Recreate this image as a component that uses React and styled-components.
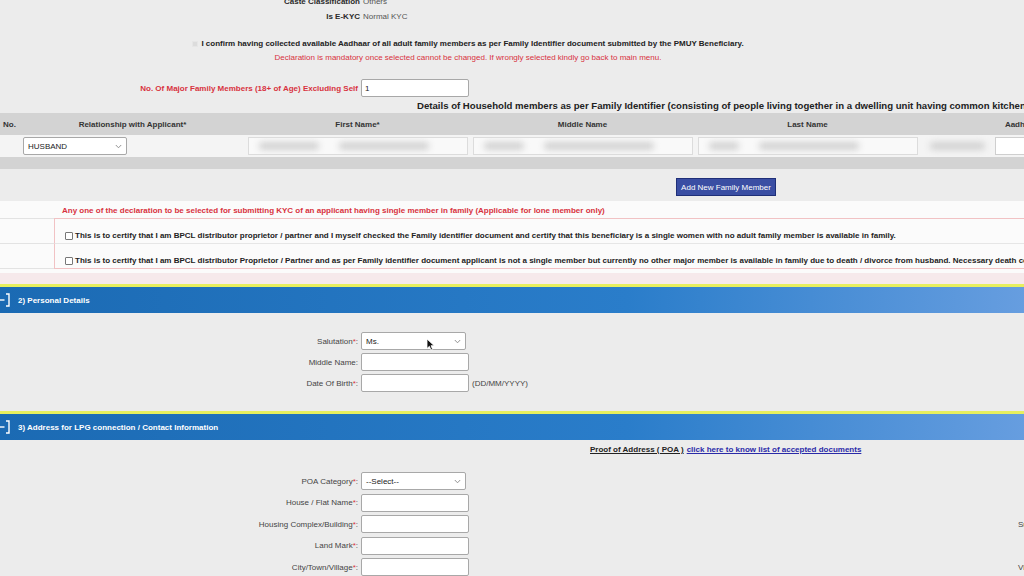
import React from 'react';
import styled, { createGlobalStyle } from 'styled-components';

const GlobalStyle = createGlobalStyle`
  * { box-sizing: border-box; }
  html, body { margin: 0; padding: 0; }
  body {
    background: #ececec;
    font-family: "Liberation Sans", Arial, sans-serif;
    font-size: 8px;
    color: #333;
    width: 1024px;
    height: 576px;
    overflow: hidden;
  }
`;

const Page = styled.div`
  width: 1024px;
  height: 576px;
  overflow: hidden;
`;

const Inner = styled.div`
  width: 1140px;
  margin-top: -6px;
`;

const InfoRow = styled.div`
  display: grid;
  grid-template-columns: 360px auto;
  column-gap: 3px;
  line-height: 15px;
`;

const InfoLabel = styled.span`
  text-align: right;
  font-weight: bold;
  color: #2a2a2a;
`;

const InfoValue = styled.span`
  color: #555;
`;

const Confirm = styled.div`
  width: 936px;
  margin-top: 14px;
  display: flex;
  justify-content: center;
  align-items: center;
  gap: 3px;
  font-weight: bold;
  color: #222;
  line-height: 12px;
  white-space: nowrap;
`;

const FaintBox = styled.span`
  width: 6px;
  height: 6px;
  background: #dcdcdc;
  border: 1px solid #e6e6e6;
`;

const RedNote = styled.div`
  width: 936px;
  text-align: center;
  color: #d8323e;
  line-height: 15px;
  white-space: nowrap;
`;

const MajorRow = styled.div`
  display: grid;
  grid-template-columns: 358px 108px;
  column-gap: 3px;
  align-items: center;
  margin-top: 14px;
  height: 18px;
`;

const MajorLabel = styled.span`
  text-align: right;
  font-weight: bold;
  color: #d8323e;
`;

const TextBox = styled.div`
  height: 18px;
  background: #fff;
  border: 1px solid #a8a8a8;
  border-radius: 2px;
  padding: 0 3px;
  display: flex;
  align-items: center;
  color: #222;
`;

const TableHeading = styled.div`
  padding-left: 417px;
  font-size: 9.6px;
  font-weight: bold;
  color: #222;
  white-space: nowrap;
  line-height: 14px;
  margin-top: 2px;
`;

const cols = '20px 225px 225px 225px 225px 220px';

const HeadRow = styled.div`
  display: grid;
  grid-template-columns: ${cols};
  height: 22px;
  align-items: center;
  background: #d3d3d3;
  font-weight: bold;
  color: #333;
`;

const HeadCell = styled.div`
  text-align: ${p => (p.$left ? 'left' : 'center')};
  padding-left: ${p => (p.$left ? '3px' : '0')};
  white-space: nowrap;
`;

const DataRow = styled.div`
  display: grid;
  grid-template-columns: ${cols};
  height: 22px;
  align-items: center;
  background: #f4f4f4;
`;

const CellInput = styled.div`
  height: 18px;
  margin-left: 3px;
  width: ${p => p.$w || 220}px;
  background: #f9f9f9;
  border: 1px solid #dcdcdc;
  display: flex;
  align-items: center;
  padding: 0 10px;
  gap: 20px;
  overflow: hidden;
`;

const AadhaarCell = styled.div`
  display: flex;
  align-items: center;
  gap: 10px;
  padding-left: 10px;
`;

const PlainInput = styled.div`
  height: 18px;
  width: 120px;
  background: #fff;
  border: 1px solid #cfcfcf;
`;

const Smudge = styled.span`
  height: 8px;
  width: ${p => p.$w}px;
  background: #d2d2d2;
  border-radius: 4px;
  filter: blur(3px);
`;

const SelectBox = styled.div`
  height: 18px;
  width: ${p => p.$w || 105}px;
  margin-left: ${p => p.$ml || 0}px;
  background: #fff;
  border: 1px solid #a8a8a8;
  border-radius: 2px;
  padding: 0 4px;
  display: flex;
  align-items: center;
  justify-content: space-between;
  color: #222;
  position: relative;
`;

const Chevron = () => (
  <svg width="7" height="5" viewBox="0 0 7 5">
    <path d="M0.8 1 L3.5 3.8 L6.2 1" fill="none" stroke="#888" strokeWidth="0.9" />
  </svg>
);

const FootBand = styled.div`
  height: 12px;
  background: #d3d3d3;
`;

const ButtonBar = styled.div`
  height: 32px;
  padding: 9px 0 0 676px;
  display: flex;
  align-items: flex-start;
`;

const AddButton = styled.button`
  height: 18px;
  width: 100px;
  padding: 0;
  background: #3a4ea3;
  border: 1px solid #1f2f78;
  color: #fff;
  font-family: inherit;
  font-size: 8px;
`;

const DeclSection = styled.div`
  background: #fbfbfb;
  padding-top: 3px;
`;

const DeclRow = styled.div`
  display: grid;
  grid-template-columns: 54px 1fr;
  height: ${p => p.$h}px;
`;

const DeclSide = styled.div`
  border-bottom: 1px solid #e3e3e3;
`;

const DeclCell = styled.div`
  display: flex;
  align-items: ${p => (p.$title ? 'center' : 'flex-end')};
  gap: 2px;
  padding-left: ${p => (p.$title ? 8 : 10)}px;
  padding-bottom: ${p => (p.$title ? 0 : 2)}px;
  white-space: nowrap;
  font-weight: bold;
  color: ${p => (p.$title ? '#d8323e' : '#222')};
  border-left: ${p => (p.$title ? 'none' : '1px solid #f1c2c4')};
  border-bottom: 1px solid ${p => (p.$last || p.$title ? '#f1c2c4' : '#e6e6e6')};
  overflow: hidden;
  line-height: 10px;
`;

const Check = styled.span`
  width: 8px;
  height: 8px;
  margin-bottom: 1px;
  border: 1px solid #777;
  border-radius: 1px;
  background: #fff;
  flex: none;
`;

const PinkStrip = styled.div`
  height: 15px;
  background: linear-gradient(#fbfbfb 0 4px, #f6e9eb 4px 100%);
`;

const SectionBar = styled.div`
  border-top: 3px solid #e7ef5e;
  height: 29px;
  background: linear-gradient(90deg, #1b6ab3 0%, #2a7dca 55%, #78a7e6 100%);
  display: flex;
  align-items: center;
  gap: 8px;
  color: #fff;
  font-weight: bold;
  white-space: nowrap;
`;

const Toggle = () => (
  <svg width="10" height="14" viewBox="0 0 10 14">
    <path d="M0 7 H4.5" stroke="#fff" strokeWidth="1.4" />
    <path d="M6 1 H9 V13 H6" fill="none" stroke="#fff" strokeWidth="1.4" />
  </svg>
);

const SectionBody = styled.div`
  height: ${p => p.$h}px;
  padding-top: ${p => p.$pt}px;
`;

const FormRow = styled.div`
  display: grid;
  grid-template-columns: 358px 108px auto;
  column-gap: 3px;
  align-items: center;
  height: 18px;
  margin-bottom: ${p => p.$mb ?? 3}px;
  white-space: nowrap;
`;

const FormLabel = styled.span`
  text-align: right;
  color: #444;
`;

const Req = styled.span`
  color: #d8323e;
`;

const Hint = styled.span`
  color: #444;
  padding-left: ${p => p.$pl || 0}px;
`;

const PoaLine = styled.div`
  padding-left: 590px;
  line-height: 14px;
  margin-bottom: 15px;
  white-space: nowrap;
  font-weight: bold;
`;

const PoaTitle = styled.span`
  color: #222;
  text-decoration: underline;
`;

const PoaLink = styled.a`
  color: #2a2aa8;
  text-decoration: underline;
  margin-left: 3px;
`;

const Cursor = styled.svg`
  position: absolute;
  left: 64px;
  top: 5px;
`;

const Label = ({ text, req }) => (
  <FormLabel>
    {text}
    {req && <Req>*</Req>}:
  </FormLabel>
);

export default function App() {
  return (
    <Page>
      <GlobalStyle />
      <Inner>
        <InfoRow>
          <InfoLabel>Caste Classification</InfoLabel>
          <InfoValue>Others</InfoValue>
        </InfoRow>
        <InfoRow>
          <InfoLabel>Is E-KYC</InfoLabel>
          <InfoValue>Normal KYC</InfoValue>
        </InfoRow>

        <Confirm>
          <FaintBox />
          I confirm having collected available Aadhaar of all adult family members as per Family Identifier document submitted by the PMUY Beneficiary.
        </Confirm>
        <RedNote>
          Declaration is mandatory once selected cannot be changed. If wrongly selected kindly go back to main menu.
        </RedNote>

        <MajorRow>
          <MajorLabel>No. Of Major Family Members (18+ of Age) Excluding Self</MajorLabel>
          <TextBox>1</TextBox>
        </MajorRow>

        <TableHeading>
          Details of Household members as per Family Identifier (consisting of people living together in a dwelling unit having common kitchen)
        </TableHeading>

        <HeadRow>
          <HeadCell $left>No.</HeadCell>
          <HeadCell>Relationship with Applicant*</HeadCell>
          <HeadCell>First Name*</HeadCell>
          <HeadCell>Middle Name</HeadCell>
          <HeadCell>Last Name</HeadCell>
          <HeadCell>Aadhaar No.*</HeadCell>
        </HeadRow>
        <DataRow>
          <span />
          <SelectBox $ml={3} $w={104}>
            HUSBAND
            <Chevron />
          </SelectBox>
          <CellInput>
            <Smudge $w={60} />
            <Smudge $w={90} />
          </CellInput>
          <CellInput>
            <Smudge $w={40} />
            <Smudge $w={110} />
          </CellInput>
          <CellInput>
            <Smudge $w={30} />
            <Smudge $w={100} />
          </CellInput>
          <AadhaarCell>
            <Smudge $w={55} />
            <PlainInput />
          </AadhaarCell>
        </DataRow>
        <FootBand />

        <ButtonBar>
          <AddButton>Add New Family Member</AddButton>
        </ButtonBar>

        <DeclSection>
          <DeclRow $h={15}>
            <DeclSide />
            <DeclCell $title>
              Any one of the declaration to be selected for submitting KYC of an applicant having single member in family (Applicable for lone member only)
            </DeclCell>
          </DeclRow>
          <DeclRow $h={25}>
            <DeclSide />
            <DeclCell>
              <Check />
              This is to certify that I am BPCL distributor proprietor / partner and I myself checked the Family identifier document and certify that this beneficiary is a single women with no adult family member is available in family.
            </DeclCell>
          </DeclRow>
          <DeclRow $h={25}>
            <DeclSide />
            <DeclCell $last>
              <Check />
              This is to certify that I am BPCL distributor Proprietor / Partner and as per Family identifier document applicant is not a single member but currently no other major member is available in family due to death / divorce from husband. Necessary death certificate / divorce document verified.
            </DeclCell>
          </DeclRow>
          <PinkStrip />
        </DeclSection>

        <SectionBar>
          <Toggle />
          2) Personal Details
        </SectionBar>
        <SectionBody $h={98} $pt={19}>
          <FormRow>
            <Label text="Salutation" req />
            <SelectBox>
              Ms.
              <Chevron />
              <Cursor width="9" height="13" viewBox="0 0 9 13">
                <path d="M1 1 L1 10.5 L3.4 8.3 L5 12 L6.6 11.3 L5 7.7 L8.2 7.7 Z" fill="#111" stroke="#fff" strokeWidth="0.8" />
              </Cursor>
            </SelectBox>
          </FormRow>
          <FormRow>
            <Label text="Middle Name" />
            <TextBox />
          </FormRow>
          <FormRow>
            <Label text="Date Of Birth" req />
            <TextBox />
            <Hint>(DD/MM/YYYY)</Hint>
          </FormRow>
        </SectionBody>

        <SectionBar>
          <Toggle />
          3) Address for LPG connection / Contact Information
        </SectionBar>
        <SectionBody $h={140} $pt={3}>
          <PoaLine>
            <PoaTitle>Proof of Address ( POA )</PoaTitle>
            <PoaLink>click here to know list of accepted documents</PoaLink>
          </PoaLine>
          <FormRow $mb={3.5}>
            <Label text="POA Category" req />
            <SelectBox>
              --Select--
              <Chevron />
            </SelectBox>
          </FormRow>
          <FormRow $mb={3.5}>
            <Label text="House / Flat Name" req />
            <TextBox />
          </FormRow>
          <FormRow $mb={3.5}>
            <Label text="Housing Complex/Building" req />
            <TextBox />
            <Hint $pl={546}>Sub Locality*:</Hint>
          </FormRow>
          <FormRow $mb={3.5}>
            <Label text="Land Mark" req />
            <TextBox />
          </FormRow>
          <FormRow $mb={3.5}>
            <Label text="City/Town/Village" req />
            <TextBox />
            <Hint $pl={546}>Village*:</Hint>
          </FormRow>
        </SectionBody>
      </Inner>
    </Page>
  );
}
